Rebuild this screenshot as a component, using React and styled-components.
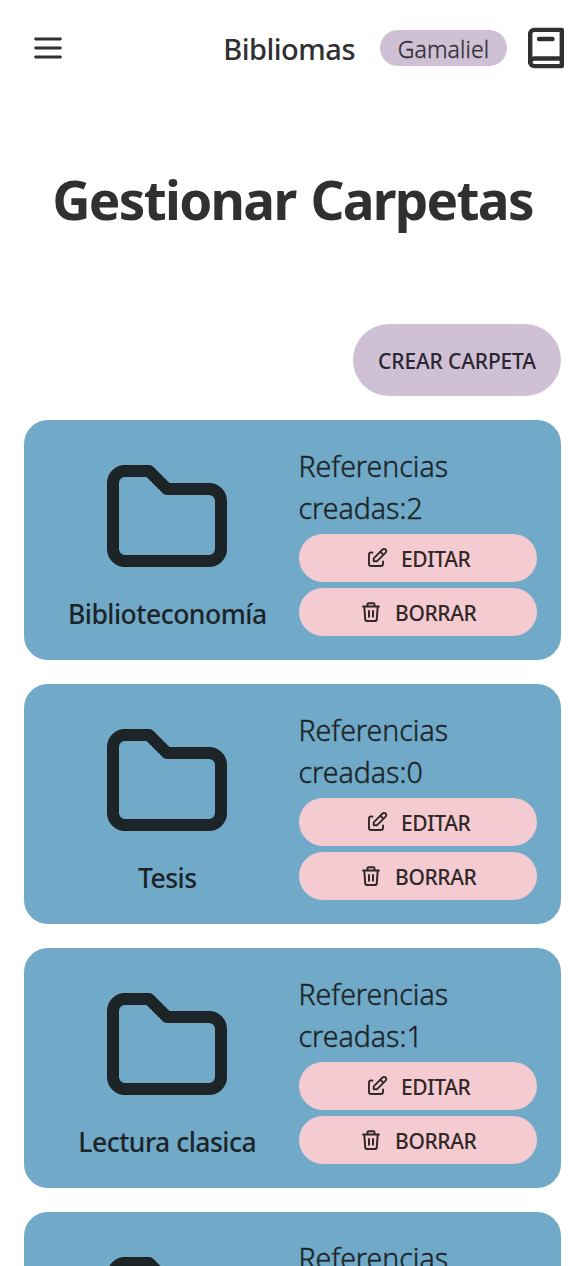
import React from 'react';
import styled, { createGlobalStyle } from 'styled-components';

const Global = createGlobalStyle`
  * { box-sizing: border-box; }
  html, body { margin: 0; background: #fff; }
  body { font-family: 'Noto Sans', 'Open Sans', sans-serif; color: #303030; overflow-x: hidden; }
  #root { height: 1266px; overflow: hidden; }
`;

const Header = styled.header`
  height: 96px;
  display: flex;
  align-items: center;
  padding: 0 18px 0 30px;
`;

const IconButton = styled.button`
  display: flex;
  padding: 0;
  border: 0;
  background: none;
  color: inherit;
`;

const Brand = styled.span`
  margin-left: auto;
  font-size: 29px;
  font-weight: 500;
  letter-spacing: -0.5px;
  line-height: 40px;
  padding-top: 1px;
`;

const UserBadge = styled.span`
  width: 127px;
  height: 36px;
  margin: 0 18px 0 25px;
  border-radius: 18px;
  background: #cfc0d6;
  color: #302c34;
  font-size: 23px;
  font-weight: 300;
  -webkit-text-stroke: 0.3px currentColor;
  letter-spacing: 0.1px;
  line-height: 39px;
  text-align: center;
`;

const Title = styled.h1`
  margin: 68px 0 0;
  height: 72px;
  font-size: 53px;
  font-weight: 700;
  letter-spacing: -1.7px;
  word-spacing: 3px;
  line-height: 72px;
  text-align: center;
  white-space: nowrap;
`;

const Actions = styled.div`
  display: flex;
  justify-content: flex-end;
  padding: 88px 24px 24px;
`;

const Button = styled.button`
  display: flex;
  align-items: center;
  justify-content: center;
  border: 0;
  padding: 0;
  font-family: inherit;
  font-size: 21px;
  font-weight: 500;
  letter-spacing: -0.4px;
  white-space: nowrap;
`;

const CreateButton = styled(Button)`
  width: 208px;
  height: 72px;
  border-radius: 36px;
  background: #cfc0d6;
  color: #2a2630;
  letter-spacing: -0.15px;
`;

const CardButton = styled(Button)`
  height: 48px;
  gap: 12px;
  border-radius: 24px;
  background: #f5cbd2;
  color: #312829;
`;

const ButtonText = styled.span`
  padding-top: 2px;
`;

const List = styled.main`
  display: flex;
  flex-direction: column;
  gap: 24px;
  padding: 0 24px;
`;

const Card = styled.article`
  height: 240px;
  padding: 24px;
  display: grid;
  grid-template-columns: 1fr 1fr;
  gap: 12px;
  border-radius: 24px;
  background: #71aac8;
  color: #1c2427;
`;

const Folder = styled.div`
  display: flex;
  flex-direction: column;
  align-items: center;
  padding-top: 3px;
`;

const FolderName = styled.h2`
  margin: 3px 0 0;
  font-size: 26.5px;
  font-weight: 500;
  letter-spacing: -0.5px;
  line-height: 40px;
  white-space: nowrap;
`;

const Details = styled.div`
  display: flex;
  flex-direction: column;
  gap: 6px;
`;

const Count = styled.p`
  margin: 0;
  height: 84px;
  padding-top: 1px;
  font-size: 28.5px;
  font-weight: 300;
  -webkit-text-stroke: 0.4px currentColor;
  letter-spacing: 0;
  line-height: 42px;
`;

const Stroke = ({ size, w, box = 24, children }) => (
  <svg width={size} height={size} viewBox={`0 0 ${box} ${box}`} fill="none" stroke="currentColor"
    strokeWidth={w} strokeLinecap="round" strokeLinejoin="round" aria-hidden="true">{children}</svg>
);

const MenuIcon = () => <Stroke size={36} w={1.9}><path d="M3.750 6h16.500M3.750 12h16.500M3.750 18h16.500" /></Stroke>;
const BookIcon = () => (
  <Stroke size={42} w={4.4} box={42}>
    <path d="M36.800 2.900H9.200a4 4 0 0 0-4 4v28.200a4 4 0 0 0 4 4h27.600z" />
    <path d="M36.800 31.500H9.200a4 4 0 0 0-4 4M14 12h13.500" />
  </Stroke>
);
const FolderIcon = () => (
  <Stroke size={144} w={2}>
    <path d="M5 4h4l3 3h7a2 2 0 0 1 2 2v8a2 2 0 0 1-2 2H5a2 2 0 0 1-2-2V6a2 2 0 0 1 2-2z" />
  </Stroke>
);
const EditIcon = () => (
  <Stroke size={24} w={1.9}>
    <path d="M7.500 6.500H6a2 2 0 0 0-2 2v9.500a2 2 0 0 0 2 2h10a2 2 0 0 0 2-2v-2.500" />
    <path d="M8.700 15.300v-3l8.800-8.800a2.150 2.150 0 0 1 3.100 3.100l-8.700 8.700zM15.300 5.700l3 3" />
  </Stroke>
);
const TrashIcon = () => (
  <Stroke size={24} w={2}>
    <path d="M4 6.500h16M8.500 6.500V4.300a1 1 0 0 1 1-1h5a1 1 0 0 1 1 1v2.200M5.300 6.500l.9 12.600a2 2 0 0 0 2 1.900h7.600a2 2 0 0 0 2-1.900l.9-12.600M10 11v5.800M14 11v5.800" />
  </Stroke>
);

const folders = [
  { name: 'Biblioteconomía', count: 2 },
  { name: 'Tesis', count: 0 },
  { name: 'Lectura clasica', count: 1 },
  { name: 'Lecturas', count: 0 },
];

export default function App() {
  return (
    <>
      <Global />
      <Header>
        <IconButton aria-label="Menú"><MenuIcon /></IconButton>
        <Brand>Bibliomas</Brand>
        <UserBadge>Gamaliel</UserBadge>
        <BookIcon />
      </Header>
      <Title>Gestionar Carpetas</Title>
      <Actions>
        <CreateButton><ButtonText>CREAR CARPETA</ButtonText></CreateButton>
      </Actions>
      <List>
        {folders.map(({ name, count }) => (
          <Card key={name}>
            <Folder>
              <FolderIcon />
              <FolderName>{name}</FolderName>
            </Folder>
            <Details>
              <Count>Referencias<br />creadas:{count}</Count>
              <CardButton><EditIcon /><ButtonText>EDITAR</ButtonText></CardButton>
              <CardButton><TrashIcon /><ButtonText>BORRAR</ButtonText></CardButton>
            </Details>
          </Card>
        ))}
      </List>
    </>
  );
}
